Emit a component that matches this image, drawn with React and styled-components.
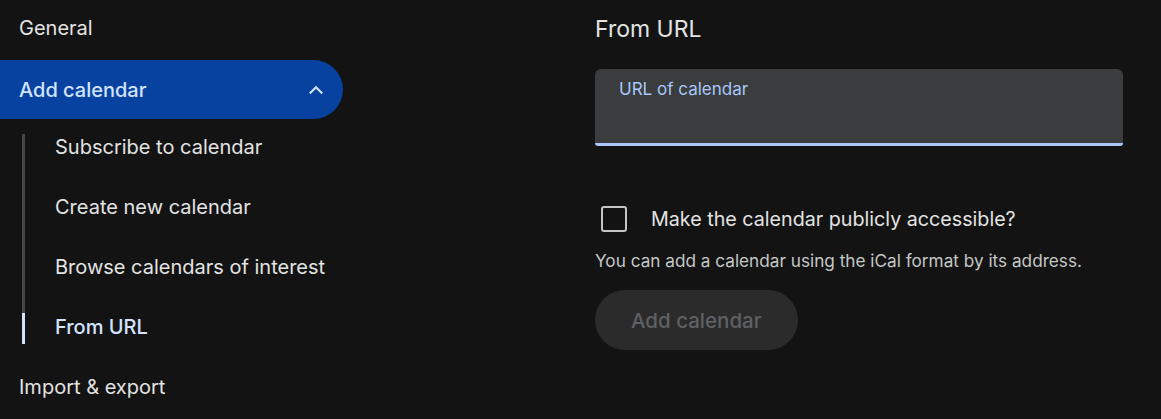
import React from 'react';
import styled, { createGlobalStyle } from 'styled-components';

const GlobalStyle = createGlobalStyle`
  body {
    margin: 0;
    background: #131314;
    font-family: Inter, Roboto, "Liberation Sans", sans-serif;
    color: #e3e3e3;
  }
`;

const Page = styled.div`
  display: flex;
  height: 419px;
  overflow: hidden;
`;

const Sidebar = styled.nav`
  width: 343px;
  flex-shrink: 0;
  display: flex;
  flex-direction: column;
`;

const NavItem = styled.div`
  height: 56px;
  display: flex;
  align-items: center;
  padding-left: 19px;
  font-size: 20px;
  color: #e3e3e3;
  margin-bottom: 4px;
`;

const ActiveItem = styled.div`
  height: 60px;
  display: flex;
  align-items: center;
  justify-content: space-between;
  padding: 0 16px 0 19px;
  background: #0842a0;
  border-radius: 0 30px 30px 0;
  font-size: 20px;
  font-weight: 500;
  color: #d3e3fd;
`;

const SubList = styled.div`
  display: flex;
  margin-left: 22px;
  margin-bottom: 4px;
`;

const Track = styled.div`
  width: 3px;
  margin: 15px 0 11px;
  background: #444746;
  display: flex;
  flex-direction: column;
  justify-content: flex-end;
`;

const TrackMark = styled.div`
  height: 31px;
  background: #d3e3fd;
`;

const SubItems = styled.div`
  display: flex;
  flex-direction: column;
  gap: 4px;
`;

const SubItem = styled.div`
  height: 56px;
  display: flex;
  align-items: center;
  padding-left: 30px;
  font-size: 20px;
  color: ${p => (p.$active ? '#d3e3fd' : '#e3e3e3')};
  font-weight: ${p => (p.$active ? 500 : 400)};
`;

const Main = styled.main`
  margin-left: 252px;
  width: 528px;
  display: flex;
  flex-direction: column;
`;

const Heading = styled.h2`
  margin: 14px 0 25px;
  font-size: 23px;
  line-height: 30px;
  font-weight: 400;
  color: #e3e3e3;
`;

const Field = styled.div`
  height: 77px;
  box-sizing: border-box;
  background: #3b3c3e;
  border-radius: 6px 6px 3px 3px;
  border-bottom: 3px solid #a8c7fa;
  padding: 10px 24px 0;
`;

const FieldLabel = styled.div`
  font-size: 17px;
  line-height: 20px;
  color: #a8c7fa;
`;

const CheckRow = styled.label`
  display: flex;
  align-items: center;
  gap: 24px;
  margin: 49px 0 0 6px;
  height: 48px;
  font-size: 19.7px;
  color: #e3e3e3;
`;

const Box = styled.span`
  width: 22px;
  height: 22px;
  border: 2.5px solid #c4c7c5;
  border-radius: 3px;
  flex-shrink: 0;
`;

const Hint = styled.p`
  margin: 7px 0 0;
  font-size: 17.2px;
  line-height: 22px;
  color: #c4c7c5;
`;

const Button = styled.button`
  margin-top: 18px;
  align-self: flex-start;
  height: 60px;
  padding: 0 36px;
  border: none;
  border-radius: 30px;
  background: #2b2b2c;
  color: #5f6061;
  font-family: inherit;
  font-size: 20.5px;
  font-weight: 500;
`;

const Chevron = () => (
  <svg width="22" height="22" viewBox="0 0 24 24" fill="none">
    <path d="M6 15l6-6 6 6" stroke="#d3e3fd" strokeWidth="2.3" strokeLinecap="square" />
  </svg>
);

export default function App() {
  return (
    <Page>
      <GlobalStyle />
      <Sidebar>
        <NavItem>General</NavItem>
        <ActiveItem>
          Add calendar
          <Chevron />
        </ActiveItem>
        <SubList>
          <Track>
            <TrackMark />
          </Track>
          <SubItems>
            <SubItem>Subscribe to calendar</SubItem>
            <SubItem>Create new calendar</SubItem>
            <SubItem>Browse calendars of interest</SubItem>
            <SubItem $active>From URL</SubItem>
          </SubItems>
        </SubList>
        <NavItem>Import &amp; export</NavItem>
      </Sidebar>
      <Main>
        <Heading>From URL</Heading>
        <Field>
          <FieldLabel>URL of calendar</FieldLabel>
        </Field>
        <CheckRow>
          <Box />
          Make the calendar publicly accessible?
        </CheckRow>
        <Hint>You can add a calendar using the iCal format by its address.</Hint>
        <Button disabled>Add calendar</Button>
      </Main>
    </Page>
  );
}
